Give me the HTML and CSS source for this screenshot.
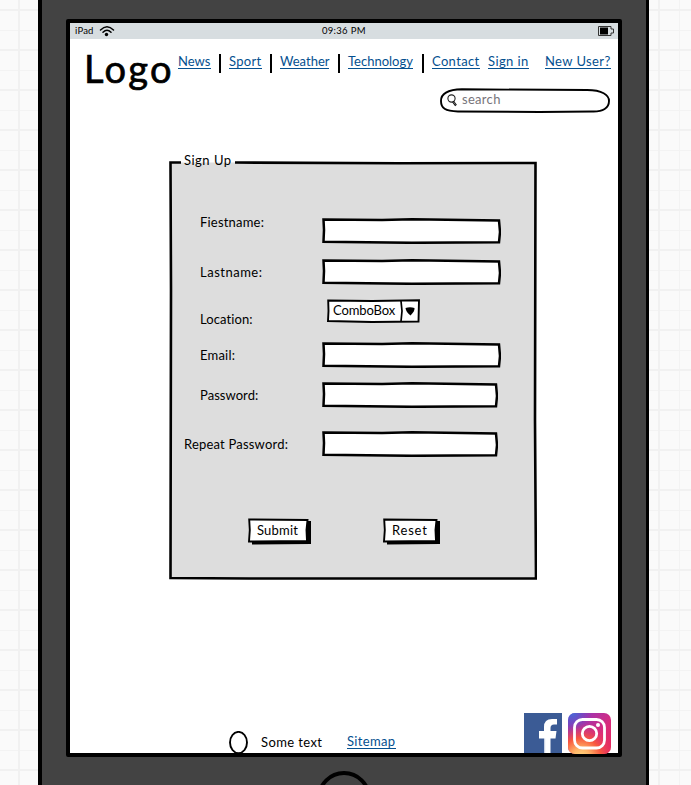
FILE: index.html
```html
<!DOCTYPE html>
<html lang="en">
<head>
<meta charset="utf-8">
<title>Sign Up</title>
<link rel="stylesheet" href="styles.css">
</head>
<body>
<div class="tablet">
  <main class="screen">
    <div class="status">
      <span class="device">iPad</span>
      <svg class="wifi" width="16" height="12" viewBox="0 0 16 12"><path d="M1.500 5Q8-1.500 14.500 5M4 7.200Q8 3.400 12 7.200" fill="none" stroke="#000" stroke-width="1.500" stroke-linecap="round"/><circle cx="7.500" cy="9.500" r="1.700"/></svg>
      <span class="time">09:36 PM</span>
      <svg class="battery" width="17" height="10" viewBox="0 0 17 10"><path d="M.5.5H13V3H15.500V7H13V9.500H.5Z" fill="#d7dde0" stroke="#333"/><path d="M2 1.500H10V8.500H2Z"/></svg>
    </div>
    <header class="header">
      <div class="logo">Logo</div>
      <nav class="nav">
        <a class="link news">News</a><i class="bar"></i>
        <a class="link sport">Sport</a><i class="bar"></i>
        <a class="link weather">Weather</a><i class="bar"></i>
        <a class="link technology">Technology</a><i class="bar"></i>
        <a class="link contact">Contact</a>
        <a class="link signin">Sign in</a>
        <a class="link newuser">New User?</a>
      </nav>
    </header>
    <div class="search">
      <svg class="outline" width="170" height="25" viewBox="0 0 171 25"><path d="M22 1.200L148 2C163 2 170 7 170 13C170 20 164 24 153 23.600L100 24L18 23.500C5 23.500 1 20 1 13C1 6 8 1.500 22 1.200Z" fill="#fff" stroke="#000" stroke-width="1.900"/></svg>
      <svg class="lens" width="11" height="13" viewBox="0 0 11 13"><circle cx="4.500" cy="4.500" r="3.600" fill="#fff" stroke="#222" stroke-width="1.100"/><path d="M6 7.500L9 11.500" stroke="#111" stroke-width="2.200"/><path d="M6.500 8L8.500 10.700" stroke="#bbb" stroke-width=".6"/></svg>
      <span class="hint">search</span>
    </div>
    <form class="panel">
      <svg class="outline" width="368" height="420" viewBox="0 0 368 420">
        <path d="M1.500 2.500L366 3L366 418L1.500 418Z" fill="#ddd"/>
        <path d="M12 2.500H1.500L2 130L1.500 418L80 418.500L367 418.500L366 260L366.500 3L230 3.200L66 2.500" fill="none" stroke="#000" stroke-width="2.600"/>
      </svg>
      <div class="legend">Sign Up</div>
      <div class="row first"><label class="label l1">Fiestname:</label>
        <svg class="field" width="179" height="26" viewBox="0 0 179 26"><path d="M1.500 1.500L60 2L90 1.300L177 2.500L178 14L177 24.300L90 24.800L1.500 23.800L2 12Z"/></svg></div>
      <div class="row second"><label class="label l2">Lastname:</label>
        <svg class="field" width="179" height="26" viewBox="0 0 179 26"><path d="M1.500 1.500L60 2L90 1.300L177 2.500L178 14L177 24.300L90 24.800L1.500 23.800L2 12Z"/></svg></div>
      <div class="row third"><label class="label l3">Location:</label>
        <div class="combo"><svg class="outline" width="93" height="24" viewBox="0 0 93 24"><path d="M1.200 1.500L45 2L92 1.200L91.500 22.500L45 23L1 22L1.500 12Z" fill="#fff" stroke="#000" stroke-width="1.900"/><path d="M74 2L75 12L74 22.500" fill="none" stroke="#000" stroke-width="1.700"/><path d="M78.500 9Q83 7.500 87.500 9Q88 12 83.500 16.500Q79 13 78.500 9Z"/></svg><span class="choice">ComboBox</span></div></div>
      <div class="row fourth"><label class="label l4">Email:</label>
        <svg class="field" width="179" height="26" viewBox="0 0 179 26"><path d="M1.500 1.500L60 2L90 1.300L177 2.500L178 14L177 24.300L90 24.800L1.500 23.800L2 12Z"/></svg></div>
      <div class="row fifth"><label class="label l5">Password:</label>
        <svg class="field" width="176" height="26" viewBox="0 0 176 26"><path d="M1.500 1.500L60 2L90 1.300L174 2.500L175 14L174 24.300L90 24.800L1.500 23.800L2 12Z"/></svg></div>
      <div class="row sixth"><label class="label l6">Repeat Password:</label>
        <svg class="field" width="176" height="26" viewBox="0 0 176 26"><path d="M1.500 1.500L60 2L90 1.300L174 2.500L175 14L174 24.300L90 24.800L1.500 23.800L2 12Z"/></svg></div>
      <div class="actions">
        <div class="button submit"><svg class="outline" width="63" height="27" viewBox="0 0 63 27"><path d="M4 3H63V26L4 26.500Z"/><path d="M1.200 1.500L59.500 2L58.500 12L59 23L1 23.500L1.800 12Z" fill="#fff" stroke="#000" stroke-width="1.900"/></svg><span class="caption">Submit</span></div>
        <div class="button reset"><svg class="outline" width="57" height="27" viewBox="0 0 57 27"><path d="M4 3H57V26L4 26.500Z"/><path d="M1.200 1.500L53.500 2L52.500 12L53 23L1 23.500L1.800 12Z" fill="#fff" stroke="#000" stroke-width="1.900"/></svg><span class="caption">Reset</span></div>
      </div>
    </form>
    <footer class="footer">
      <svg class="oval" width="19" height="23" viewBox="0 0 19 23"><ellipse cx="9.500" cy="11.500" rx="8.500" ry="10.600" fill="#fff" stroke="#000" stroke-width="1.900"/></svg>
      <span class="sometext">Some text</span>
      <a class="link sitemap">Sitemap</a>
      <svg class="facebook" width="38" height="40" viewBox="0 0 38 40"><path d="M0 0H38V40H0Z" fill="#3b5b95"/><path d="M20 40V25.500H15V18H20V14Q20 6 28 6H33V11.500H30Q26.500 11.500 26.500 15V18H32.500L31.500 25.500H26.500V40Z" fill="#fff"/><path d="M20 40V25.500H21.200V40Z" fill="#cbd4e5"/></svg>
      <svg class="instagram" width="43" height="41" viewBox="0 0 43 41">
        <defs>
          <linearGradient id="base" x1="0" y1="0" x2="1" y2=".8"><stop offset="0" stop-color="#6746c8"/><stop offset=".35" stop-color="#a832a8"/><stop offset=".7" stop-color="#d92b7d"/><stop offset="1" stop-color="#e6285e"/></linearGradient>
          <radialGradient id="glow" cx=".3" cy="1.080" r=".85"><stop offset="0" stop-color="#ffdc83"/><stop offset=".25" stop-color="#ffb266"/><stop offset=".55" stop-color="#f8583e"/><stop offset="1" stop-color="#e02c70" stop-opacity="0"/></radialGradient>
          <radialGradient id="sky" cx=".1" cy="0" r=".45"><stop offset="0" stop-color="#456bd8"/><stop offset="1" stop-color="#7145c4" stop-opacity="0"/></radialGradient>
        </defs>
        <rect width="43" height="41" rx="7" fill="url(#base)"/>
        <rect width="43" height="41" rx="7" fill="url(#glow)"/>
        <rect width="43" height="41" rx="7" fill="url(#sky)"/>
        <rect x="6.500" y="6.500" width="30" height="28.500" rx="8" fill="none" stroke="#fff" stroke-width="2.800"/><circle cx="21.500" cy="20.500" r="7.200" fill="none" stroke="#fff" stroke-width="2.800"/><circle cx="30" cy="12" r="2" fill="#fff"/>
      </svg>
    </footer>
  </main>
  <div class="home"></div>
</div>
</body>
</html>
```
FILE: styles.css
```css
* { box-sizing: border-box; }
html, body { margin: 0; height: 785px; overflow: hidden; }
body {
  font: 13px/14px Lato, "Liberation Sans", sans-serif;
  color: #000;
  background-color: #fafafa;
  background-image:
    linear-gradient(90deg, #f1f1f1 2px, transparent 2px),
    linear-gradient(#f1f1f1 2px, transparent 2px),
    linear-gradient(90deg, #f3f3f3 1px, transparent 1px),
    linear-gradient(#f3f3f3 1px, transparent 1px);
  background-size: 40px 40px;
  background-position: 18px 0, 0 9px, 39px 0, 0 30px;
}
.tablet {
  width: 611px; height: 785px; margin-left: 38px;
  padding: 19px 0 0 24px;
  border: solid #000; border-width: 0 3px 0 4px;
  background: #434343; overflow: hidden;
}
.screen {
  width: 556px; height: 738px;
  border: 4px solid #000; border-radius: 2px;
  background: #fff;
}
.outline { position: absolute; inset: 0; z-index: -1; }
.status { display: flex; height: 16px; background: #d7dde0; font-size: 9.5px; line-height: 16px; padding-left: 5px; }
.device { width: 24px; letter-spacing: .2px; }
.wifi { margin-top: 2px; }
.time { margin-left: 207px; width: 60px; letter-spacing: .3px; }
.battery { margin: 3px 0 0 216px; }
.header { display: flex; height: 49px; }
.logo {
  width: 94px; margin-left: 14px; padding-top: 8px;
  font-size: 38px; line-height: 42px; letter-spacing: 2.3px;
  -webkit-text-stroke: .7px #000;
}
.nav { display: flex; padding-top: 15px; }
.link { display: block; height: 15px; border-bottom: 1px solid #05508f; color: #05508f; white-space: nowrap; }
.bar { width: 2px; height: 19px; background: #000; }
.news { width: 33px; margin-right: 8px; }
.sport { width: 33px; margin: 0 8px; letter-spacing: .3px; }
.weather { width: 49px; margin: 0 9px 0 8px; }
.technology { width: 65px; margin: 0 9px 0 8px; }
.contact { width: 48px; margin: 0 8px; letter-spacing: .35px; }
.signin { width: 41px; margin-right: 16px; letter-spacing: .4px; }
.newuser { width: 66px; letter-spacing: .4px; }
.search { position: relative; z-index: 0; display: flex; width: 171px; height: 25px; margin-left: 370px; padding: 6px 0 0 7px; }
.hint { margin: -2px 0 0 4px; color: #77747a; letter-spacing: .3px; }
.panel { display: flow-root; position: relative; z-index: 0; width: 368px; height: 420px; margin: 47px 0 0 99px; }
.legend { padding: 2px 0 0 15px; margin-top: -9px; height: 18px; letter-spacing: .5px; }
.row { display: flex; padding-left: 31px; }
.first { height: 41px; margin-top: 49px; }
.second { height: 40px; }
.third { height: 43px; }
.fourth { height: 40px; }
.fifth { height: 49px; }
.sixth { height: 87px; padding-left: 15px; }
.label { width: 122px; letter-spacing: .2px; white-space: nowrap; }
.sixth .label { width: 138px; }
.l1 { margin-top: -3px; }
.l2 { margin-top: 6px; letter-spacing: .5px; }
.l3 { margin-top: 13px; letter-spacing: .1px; }
.l4, .l5, .l6 { margin-top: 6px; }
.l5 { letter-spacing: .05px; }
.field { flex: none; fill: #fff; stroke: #000; stroke-width: 2.5px; }
.combo { position: relative; z-index: 0; width: 93px; height: 24px; margin-left: 5px; padding: 4px 0 0 6px; letter-spacing: -.1px; }
.actions { display: flex; padding-left: 79px; }
.button { position: relative; z-index: 0; height: 27px; padding: 5px 0 0 9px; letter-spacing: .2px; }
.submit { width: 63px; margin-right: 72px; }
.reset { width: 57px; letter-spacing: .8px; }
.footer { display: flex; height: 40px; margin-top: 133px; padding-left: 159px; }
.oval { margin-top: 18px; }
.sometext { width: 73px; margin: 22px 0 0 13px; letter-spacing: .4px; }
.sitemap { width: 49px; margin: 21px 0 0 13px; height: 15px; letter-spacing: .35px; }
.facebook { margin-left: 128px; flex: none; }
.instagram { margin-left: 6px; flex: none; }
.home { width: 54px; height: 54px; margin: 14px 0 0 251px; border: 4px solid #000; border-radius: 50%; }
```
